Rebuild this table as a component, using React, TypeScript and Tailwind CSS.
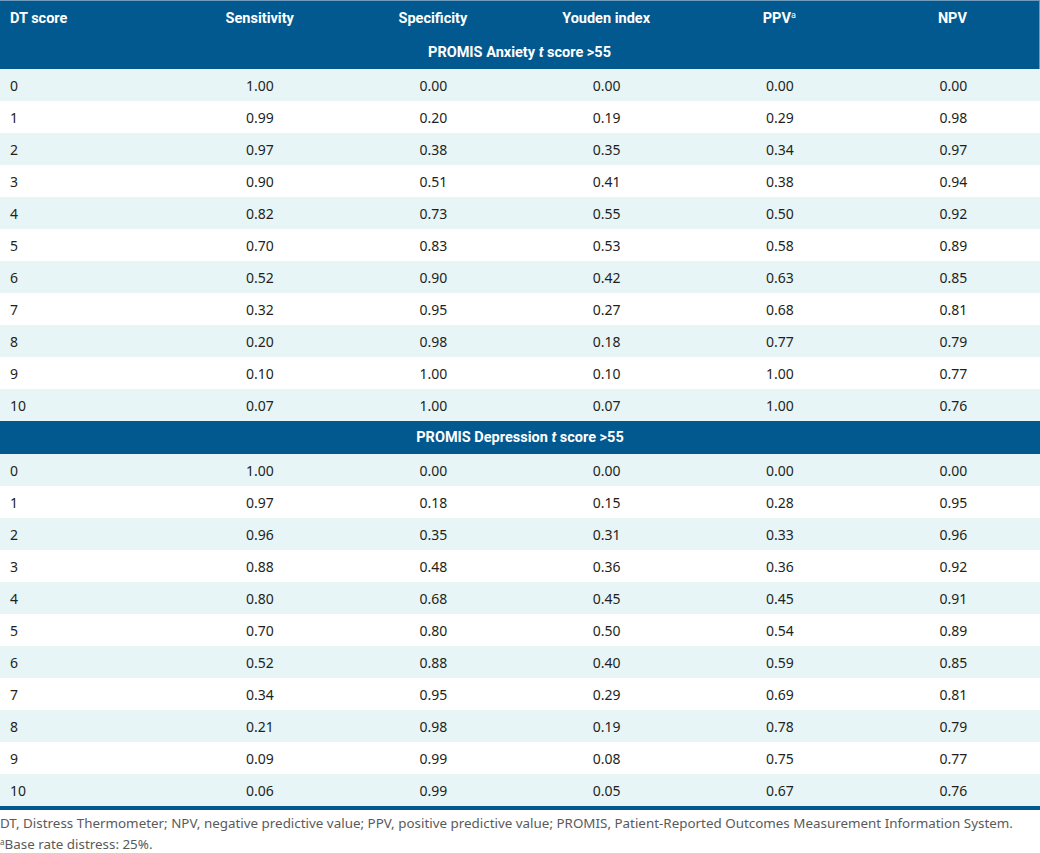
import React from 'react';

const anxiety = [
  ['0', '1.00', '0.00', '0.00', '0.00', '0.00'],
  ['1', '0.99', '0.20', '0.19', '0.29', '0.98'],
  ['2', '0.97', '0.38', '0.35', '0.34', '0.97'],
  ['3', '0.90', '0.51', '0.41', '0.38', '0.94'],
  ['4', '0.82', '0.73', '0.55', '0.50', '0.92'],
  ['5', '0.70', '0.83', '0.53', '0.58', '0.89'],
  ['6', '0.52', '0.90', '0.42', '0.63', '0.85'],
  ['7', '0.32', '0.95', '0.27', '0.68', '0.81'],
  ['8', '0.20', '0.98', '0.18', '0.77', '0.79'],
  ['9', '0.10', '1.00', '0.10', '1.00', '0.77'],
  ['10', '0.07', '1.00', '0.07', '1.00', '0.76'],
];

const depression = [
  ['0', '1.00', '0.00', '0.00', '0.00', '0.00'],
  ['1', '0.97', '0.18', '0.15', '0.28', '0.95'],
  ['2', '0.96', '0.35', '0.31', '0.33', '0.96'],
  ['3', '0.88', '0.48', '0.36', '0.36', '0.92'],
  ['4', '0.80', '0.68', '0.45', '0.45', '0.91'],
  ['5', '0.70', '0.80', '0.50', '0.54', '0.89'],
  ['6', '0.52', '0.88', '0.40', '0.59', '0.85'],
  ['7', '0.34', '0.95', '0.29', '0.69', '0.81'],
  ['8', '0.21', '0.98', '0.19', '0.78', '0.79'],
  ['9', '0.09', '0.99', '0.08', '0.75', '0.77'],
  ['10', '0.06', '0.99', '0.05', '0.67', '0.76'],
];

const Rows = ({ rows }: { rows: string[][] }) => (
  <>
    {rows.map((r, i) => (
      <div
        key={i}
        className={`grid grid-cols-6 h-[32px] items-center text-[14px] text-[#231f20] ${i % 2 === 0 ? 'bg-[#e7f5f7]' : 'bg-white'}`}
      >
        {r.map((c, j) => (
          <div key={j} className={j === 0 ? 'pl-[10px]' : 'text-center'}>
            {c}
          </div>
        ))}
      </div>
    ))}
  </>
);

export default function App() {
  return (
    <div className="w-[1040px] bg-white" style={{ fontFamily: '"Noto Sans", "Open Sans", sans-serif' }}>
      <div className="bg-[#02598f] border-t border-r border-[#6f9cbd] text-white font-bold text-[14.5px]" style={{ fontFamily: 'Roboto, "Noto Sans", sans-serif' }}>
        <div className="grid grid-cols-6 h-[35px] items-center">
          <div className="pl-[10px]">DT score</div>
          <div className="text-center">Sensitivity</div>
          <div className="text-center">Specificity</div>
          <div className="text-center">Youden index</div>
          <div className="text-center">
            PPV<sup className="text-[9px] font-normal">a</sup>
          </div>
          <div className="text-center">NPV</div>
        </div>
        <div className="h-[33px] flex items-center justify-center">
          <span>
            PROMIS Anxiety <i>t</i> score &gt;55
          </span>
        </div>
      </div>
      <Rows rows={anxiety} />
      <div
        className="h-[33px] bg-[#02598f] flex items-center justify-center text-white font-bold text-[14.5px]"
        style={{ fontFamily: 'Roboto, "Noto Sans", sans-serif' }}
      >
        <span>
          PROMIS Depression <i>t</i> score &gt;55
        </span>
      </div>
      <Rows rows={depression} />
      <div className="h-[4px] bg-[#02598f]" />
      <div className="pt-[3px] text-[13.4px] text-[#5a5a5a] leading-[21px] whitespace-nowrap">
        <div>
          DT, Distress Thermometer; NPV, negative predictive value; PPV, positive predictive value; PROMIS, Patient-Reported Outcomes Measurement Information System.
        </div>
        <div>
          <sup className="text-[8px]">a</sup>Base rate distress: 25%.
        </div>
      </div>
    </div>
  );
}
